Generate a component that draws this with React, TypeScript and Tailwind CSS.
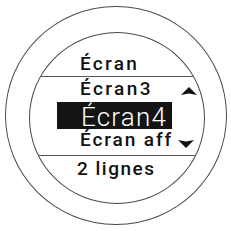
import React from "react";

const font = { fontFamily: 'Roboto, "Liberation Sans", Arial, sans-serif' };

const ArrowUp = () => (
  <svg width="16" height="8" viewBox="0 0 16 8" className="block">
    <path d="M0 8 L8 0 L16 8 L8 6.5 Z" fill="#111" />
  </svg>
);

const ArrowDown = () => (
  <svg width="16" height="8" viewBox="0 0 16 8" className="block">
    <path d="M0 0 L8 8 L16 0 L8 1.5 Z" fill="#111" />
  </svg>
);

const App = () => {
  return (
    <div
      className="w-[231px] h-[231px] bg-white pl-[5px] pt-[6px] text-[#111]"
      style={font}
    >
      <div className="w-[222px] h-[219px] rounded-[50%] border-[1.5px] border-[#4a4a4a] pl-[22.5px] pt-[24.5px]">
        <div className="w-[176px] h-[172px] rounded-[50%] border-[1.5px] border-[#4a4a4a] overflow-hidden flex flex-col">
          <div className="pt-[21.6px] pl-[50.5px] h-[43px] text-[19px] font-medium leading-[20px] tracking-[2.3px]">
            Écran
          </div>
          <div className="border-t-[1.5px] border-[#555]" />
          <div className="mt-[2.1px] h-[20px] flex items-start pl-[50.5px]">
            <span className="w-[101px] text-[19px] font-medium leading-[20px] tracking-[2.4px]">
              Écran3
            </span>
            <span className="mt-[8px]">
              <ArrowUp />
            </span>
          </div>
          <div className="mt-[3.9px] ml-[27.5px] w-[115px] h-[27px] bg-[#141414] text-white pl-[24px] pt-[2.1px]">
            <span className="block text-[26px] font-light leading-[24px] tracking-[1.2px]">
              Écran4
            </span>
          </div>
          <div className="mt-[0.1px] h-[20px] flex items-start pl-[50.5px]">
            <span className="w-[98px] text-[19px] font-medium leading-[20px] tracking-[1.9px] whitespace-nowrap">
              Écran aff
            </span>
            <span className="mt-[10.5px]">
              <ArrowDown />
            </span>
          </div>
          <div className="mt-[5.1px] border-t-[1.5px] border-[#555]" />
          <div className="mt-[3.1px] pl-[47.5px] text-[19px] font-medium leading-[20px] tracking-[1.5px]">
            2 lignes
          </div>
        </div>
      </div>
    </div>
  );
};

export default App;
